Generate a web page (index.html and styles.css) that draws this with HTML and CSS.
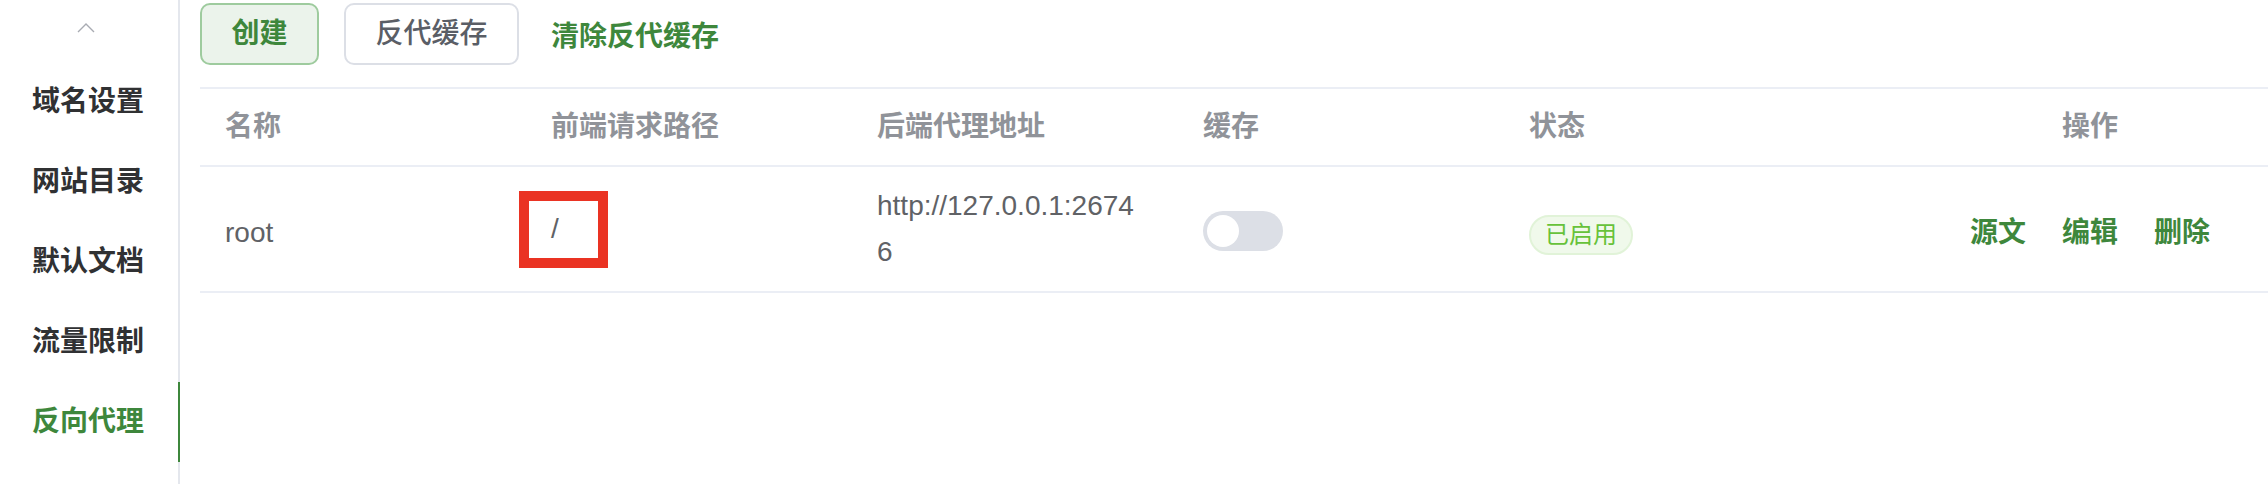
FILE: index.html
```html
<!DOCTYPE html>
<html lang="zh-CN">
<head>
  <meta charset="UTF-8">
  <title>反向代理</title>
  <link rel="stylesheet" href="styles.css">
</head>
<body>
  <div class="page">
    <aside class="side">
      <div class="side-up">
        <svg width="18" height="10" viewBox="0 0 18 10">
          <polyline points="1,9 9,1 17,9" fill="none" stroke="#a8abb2" stroke-width="1.4"/>
        </svg>
      </div>
      <ul class="side-menu">
        <li>域名设置</li>
        <li>网站目录</li>
        <li>默认文档</li>
        <li>流量限制</li>
        <li class="active">反向代理</li>
      </ul>
    </aside>

    <main class="content">
      <div class="toolbar">
        <button class="btn btn-primary">创建</button>
        <button class="btn">反代缓存</button>
        <a class="link-btn">清除反代缓存</a>
      </div>

      <table class="proxy-table">
        <colgroup>
          <col class="col-w">
          <col class="col-w">
          <col class="col-w">
          <col class="col-w">
          <col class="col-w">
          <col>
        </colgroup>
        <thead>
          <tr>
            <th>名称</th>
            <th>前端请求路径</th>
            <th>后端代理地址</th>
            <th>缓存</th>
            <th>状态</th>
            <th class="op">操作</th>
          </tr>
        </thead>
        <tbody>
          <tr>
            <td class="cell-low">root</td>
            <td><span class="path-mark">/</span></td>
            <td><div class="addr">http://127.0.0.1:26746</div></td>
            <td><span class="switch"><span class="knob"></span></span></td>
            <td class="cell-low"><span class="tag">已启用</span></td>
            <td class="op cell-low">
              <div class="actions">
                <a>源文</a>
                <a>编辑</a>
                <a>删除</a>
              </div>
            </td>
          </tr>
        </tbody>
      </table>
    </main>
  </div>
</body>
</html>
```

FILE: styles.css
```css
body {
  margin: 0;
  font-family: "Liberation Sans", "Noto Sans CJK SC", sans-serif;
  font-size: 28px;
  color: #606266;
  background: #fff;
}
.page {
  display: flex;
  height: 100vh;
  overflow: hidden;
}

/* left menu */
.side {
  width: 178px;
  flex-shrink: 0;
  border-right: 2px solid #e4e7ed;
}
.side-up {
  height: 62px;
  box-sizing: border-box;
  padding: 23px 6px 0 0;
  display: flex;
  justify-content: center;
  align-items: flex-start;
}
.side-up svg {
  display: block;
}
.side-menu {
  list-style: none;
  margin: 0;
  padding: 0;
}
.side-menu li {
  height: 80px;
  line-height: 80px;
  padding-left: 32px;
  margin-right: -2px;
  border-right: 2px solid transparent;
  color: #303133;
  font-weight: 600;
}
.side-menu li.active {
  color: #3e873c;
  border-right-color: #3e873c;
}

/* main */
.content {
  flex: 1;
  min-width: 0;
  padding-left: 20px;
  overflow: hidden;
}
.toolbar {
  display: flex;
  align-items: center;
  gap: 25px;
  padding-top: 3px;
  margin-bottom: 22px;
}
.btn {
  height: 62px;
  box-sizing: border-box;
  padding: 0 29.5px;
  border: 2px solid #dcdfe6;
  border-radius: 10px;
  background: #fff;
  font: inherit;
  font-weight: 500;
  line-height: 58px;
  color: #5a5e66;
}
.btn-primary {
  background: #ebf3eb;
  border-color: #9ecb9e;
  color: #3e873c;
  font-weight: 600;
}
.link-btn {
  padding-left: 7px;
  color: #3e873c;
  font-weight: 600;
}

/* table */
.proxy-table {
  width: 2150px;
  table-layout: fixed;
  border-collapse: separate;
  border-spacing: 0;
}
.col-w {
  width: 326px;
}
.proxy-table th {
  text-align: left;
  padding: 0 25px;
  line-height: 76px;
  color: #909399;
  font-weight: 600;
  border-top: 2px solid #ebeef5;
  border-bottom: 2px solid #ebeef5;
}
.proxy-table td {
  padding: 16px 25px;
  line-height: 46px;
  vertical-align: middle;
  border-bottom: 2px solid #ebeef5;
}
.proxy-table td.cell-low {
  padding-top: 20px;
  padding-bottom: 12px;
}
.proxy-table .op {
  text-align: center;
}
.addr {
  width: 266px;
  word-break: break-all;
}

/* red annotation box around the path */
.path-mark {
  position: relative;
  display: inline-block;
}
.path-mark::after {
  content: "";
  position: absolute;
  left: -32px;
  right: -49px;
  top: -15px;
  bottom: -16px;
  border: 10px solid #ea3323;
}

.switch {
  display: inline-flex;
  vertical-align: middle;
  width: 80px;
  height: 40px;
  box-sizing: border-box;
  padding: 4px;
  border-radius: 20px;
  background: #dcdfe6;
}
.knob {
  width: 32px;
  height: 32px;
  border-radius: 50%;
  background: #fff;
}
.tag {
  display: inline-block;
  vertical-align: middle;
  height: 40px;
  box-sizing: border-box;
  padding: 0 14px;
  border: 2px solid #e1f3d8;
  border-radius: 20px;
  background: #f0f9eb;
  color: #67c23a;
  font-size: 24px;
  line-height: 36px;
}
.actions {
  display: flex;
  justify-content: center;
  gap: 36px;
}
.actions a {
  color: #3e873c;
  font-weight: 600;
}
```
